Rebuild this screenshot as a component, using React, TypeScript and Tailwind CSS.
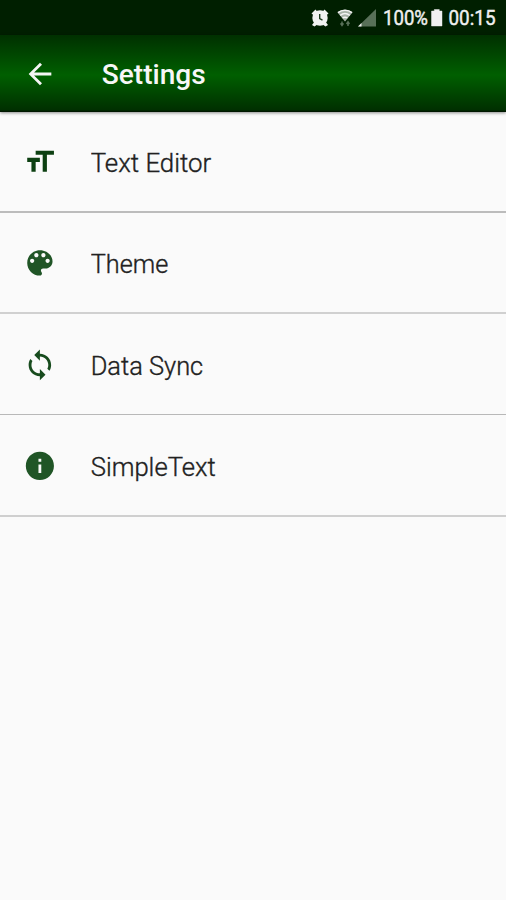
import React from "react";

const rows = [
  {
    label: "Text Editor",
    width: 120.5,
    box: "h-[101px] pt-[1px] border-b-2 border-[#bcbcbc]",
    fill: "#0d4012",
    path: "M9 4v3h5v12h3V7h5V4H9zm-6 8h3v7h3v-7h3V9H3v3z",
  },
  {
    label: "Theme",
    width: 77.5,
    box: "h-[101px] pt-[1px] border-b-2 border-[#d0d0d0]",
    fill: "#205526",
    path: "M12 3c-4.97 0-9 4.03-9 9s4.03 9 9 9c.83 0 1.5-.67 1.5-1.5 0-.39-.15-.74-.39-1.01-.23-.26-.38-.61-.38-.99 0-.83.67-1.5 1.5-1.5H16c2.76 0 5-2.24 5-5 0-4.42-4.03-8-9-8zm-5.5 9c-.83 0-1.5-.67-1.5-1.5S5.67 9 6.5 9 8 9.67 8 10.5 7.33 12 6.5 12zm3-4C8.67 8 8 7.33 8 6.5S8.67 5 9.5 5s1.5.67 1.5 1.5S10.33 8 9.5 8zm5 0c-.83 0-1.5-.67-1.5-1.5S13.67 5 14.5 5s1.5.67 1.5 1.5S15.33 8 14.5 8zm3 4c-.83 0-1.5-.67-1.5-1.5S16.67 9 17.5 9s1.5.67 1.5 1.5-.67 1.5-1.5 1.5z",
  },
  {
    label: "Data Sync",
    width: 112.5,
    box: "h-[101px] pt-[1px] border-b border-[#b8b8b8]",
    fill: "#174b1d",
    path: "M12 4V1L8 5l4 4V6c3.31 0 6 2.69 6 6 0 1.01-.25 1.97-.7 2.8l1.46 1.46C19.54 15.03 20 13.57 20 12c0-4.42-3.58-8-8-8zm0 14c-3.31 0-6-2.69-6-6 0-1.01.25-1.97.7-2.8L5.24 7.74C4.46 8.97 4 10.43 4 12c0 4.42 3.58 8 8 8v3l4-4-4-4v3z",
  },
  {
    label: "SimpleText",
    width: 125,
    box: "h-[102px] pt-[1px] border-b-2 border-[#cfcfcf]",
    fill: "#205526",
    path: "M12 2C6.48 2 2 6.48 2 12s4.48 10 10 10 10-4.48 10-10S17.52 2 12 2zm1 15h-2v-6h2v6zm0-8h-2V7h2v2z",
  },
];

function StatusBar() {
  return (
    <div className="flex h-[35px] items-center justify-end bg-[#001f00] pr-[6px] leading-none">
      <svg className="mr-[8px]" width="18" height="18" viewBox="0 0 18 18">
        <path d="M.5 4.500 4.500.5 7 3.500 3.500 7zM17.500 4.500 13.500.5 11 3.500 14.500 7zM1 16 4 12l3 3-3.500 2.500zM17 16 14 12l-3 3 3.500 2.500z" fill="#f2f2f2" />
        <circle cx="9" cy="9" r="7.700" fill="#f2f2f2" />
        <path d="M8.700 5v4.700l2.800 1.500" fill="none" stroke="#203c20" strokeWidth="1.400" />
      </svg>
      <svg className="mr-[5px]" width="16" height="18" viewBox="0 0 16 18">
        <path d="M.5 3.500C4.500-.2 11.500-.2 15.500 3.500L8 12.500z" fill="#a8b3a8" />
        <path d="M1 3.600C5 .3 11 .3 15 3.600M3.200 6.300c2.900-2.200 6.700-2.200 9.600 0M5.500 9c1.500-1 3.500-1 5 0" fill="none" stroke="#f2f2f2" strokeWidth="1.500" />
        <path d="M5 12.500v3.500M3.500 14.300 5 16.500 6.500 14.300M11 17v-3.500M9.500 15 11 12.800 12.500 15" fill="none" stroke="#587058" strokeWidth="1.500" />
      </svg>
      <svg className="mr-[7px]" width="18" height="18" viewBox="0 0 18 18">
        <path d="M0 17.500 18 0v17.500z" fill="#587058" />
        <path d="M0 17.500 3.500 14v3.500z" fill="#eee" />
      </svg>
      <svg width="117" height="30" viewBox="0 -3 117 30" className="font-[Roboto,sans-serif]" fill="#f0f0f0" stroke="#f0f0f0" strokeWidth=".45" fontSize="21">
        <text x="0" y="19" textLength="45" lengthAdjust="spacingAndGlyphs">100%</text>
        <path d="M48.500 5h2.800V3.500h5V5H59v15H48.500z" />
        <text x="65.500" y="19" textLength="47" lengthAdjust="spacingAndGlyphs">00:15</text>
      </svg>
    </div>
  );
}

export default function App() {
  return (
    <div className="flex h-[900px] w-[506px] flex-col overflow-hidden bg-[#fafafa] font-[Roboto,sans-serif]">
      <StatusBar />
      <header className="z-10 flex h-[77px] items-center bg-[linear-gradient(#003000_0%,#005f00_52%,#003000_97%,#001000_100%)] pl-[23px] shadow-[0_1px_3px_rgba(0,0,0,0.45)]">
        <svg width="34" height="34" viewBox="0 0 24 24" fill="#f5f5f5">
          <path d="M20 11H7.830l5.590-5.590L12 4l-8 8 8 8 1.410-1.410L7.830 13H20v-2z" />
        </svg>
        <h1 className="ml-[45px] h-[40px]">
          <svg width="120" height="40" fill="#f7f7f7">
            <text x="-.3" y="30" fontSize="28" fontWeight="500" textLength="104" lengthAdjust="spacingAndGlyphs">Settings</text>
          </svg>
        </h1>
      </header>
      <main>
        {rows.map((row) => (
          <div key={row.label} className={`flex items-center pl-[23px] ${row.box}`}>
            <svg width="33.750" height="33.750" viewBox="0 0 24 24" fill={row.fill}>
              <path d={row.path} />
            </svg>
            <svg className="ml-[34px]" width="180" height="40" fill="#212121" stroke="#212121" strokeWidth=".35">
              <text x="-.3" y="29.500" fontSize="25.300" fontWeight="300" textLength={row.width} lengthAdjust="spacingAndGlyphs">{row.label}</text>
            </svg>
          </div>
        ))}
      </main>
    </div>
  );
}
